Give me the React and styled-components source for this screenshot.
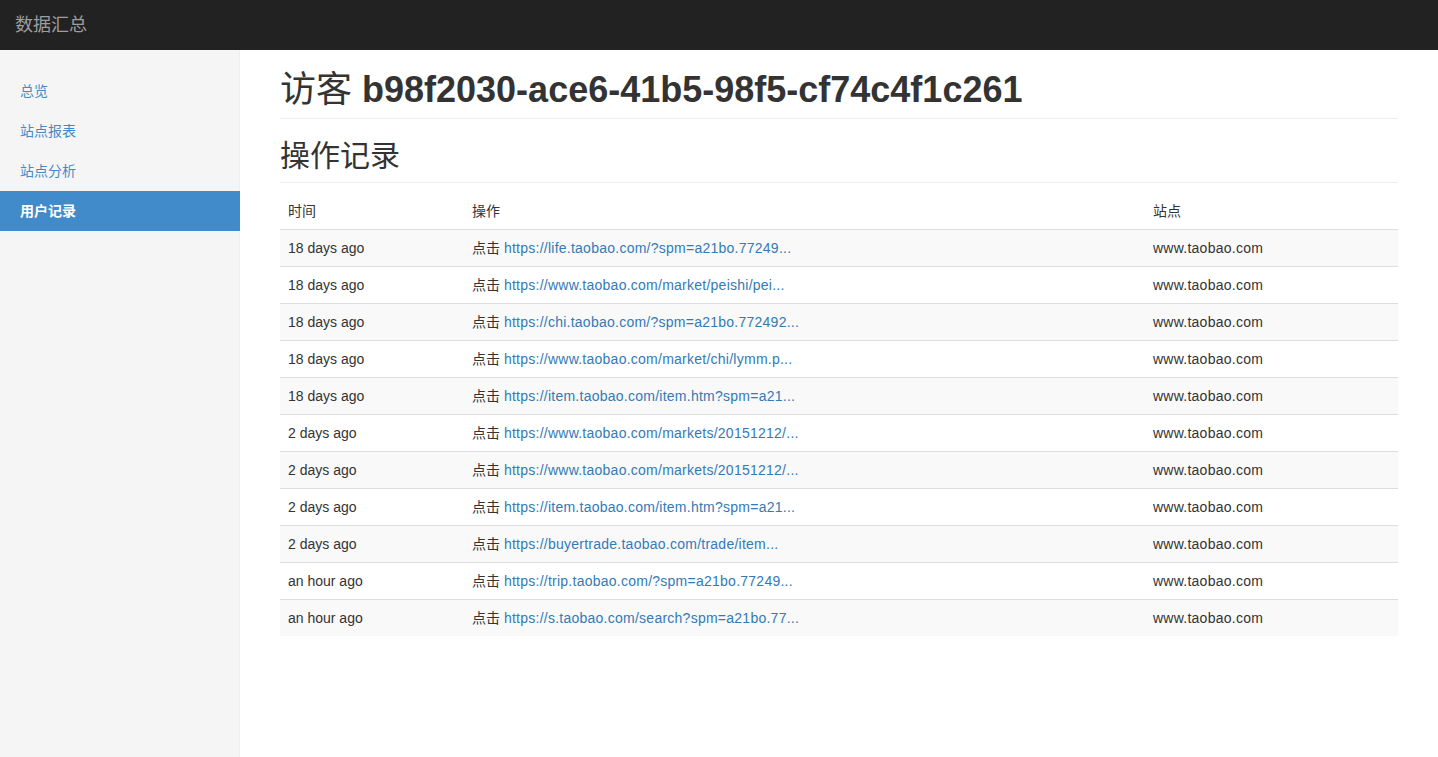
import React from "react";
import styled, { createGlobalStyle } from "styled-components";

const Global = createGlobalStyle`
  html, body { margin: 0; padding: 0; height: 100%; }
  body {
    font-family: "Liberation Sans", Arial, "Noto Sans CJK SC", sans-serif;
    font-size: 14px;
    line-height: 1.42857;
    color: #333;
    background: #fff;
  }
  * { box-sizing: border-box; }
`;

const Page = styled.div`
  display: flex;
  flex-direction: column;
  min-height: 757px;
`;

const Navbar = styled.header`
  height: 50px;
  background: #222;
  display: flex;
  align-items: center;
  padding: 0 15px;
  flex-shrink: 0;
`;

const Brand = styled.a`
  color: #9d9d9d;
  font-size: 18px;
  line-height: 20px;
  text-decoration: none;
`;

const Body = styled.div`
  display: flex;
  flex: 1;
`;

const Sidebar = styled.nav`
  width: 240px;
  flex-shrink: 0;
  background: #f5f5f5;
  border-right: 1px solid #eee;
  padding-top: 21px;
`;

const NavList = styled.ul`
  list-style: none;
  margin: 0;
  padding: 0;
`;

const NavItem = styled.li`
  a {
    display: block;
    padding: 10px 20px;
    line-height: 20px;
    font-size: 14px;
    text-decoration: none;
    color: ${(p) => (p.$active ? "#fff" : "#428bca")};
    background: ${(p) => (p.$active ? "#428bca" : "transparent")};
    font-weight: ${(p) => (p.$active ? "bold" : "normal")};
    margin-right: -1px;
  }
`;

const Main = styled.main`
  flex: 1;
  padding: 20px 40px 0 40px;
`;

const PageHeader = styled.h1`
  margin: 0 0 20px;
  padding-bottom: 8px;
  border-bottom: 1px solid #eee;
  font-size: 36px;
  line-height: 1.1;
  font-weight: normal;
  color: #333;
`;

const VisitorId = styled.span`
  font-weight: bold;
`;

const SubHeader = styled.h2`
  margin: 0 0 10px;
  padding-bottom: 10px;
  border-bottom: 1px solid #eee;
  font-size: 30px;
  line-height: 1.1;
  font-weight: normal;
  color: #333;
`;

const Table = styled.table`
  width: 100%;
  border-collapse: collapse;
  border-spacing: 0;
  font-size: 14px;
  margin-top: 10px;
`;

const Th = styled.th`
  text-align: left;
  font-weight: normal;
  padding: 8px;
  line-height: 20px;
  border-bottom: 1px solid #ddd;
  width: ${(p) => p.$w || "auto"};
`;

const Tr = styled.tr`
  background: ${(p) => (p.$odd ? "#f9f9f9" : "#fff")};
`;

const Td = styled.td`
  padding: 8px;
  line-height: 20px;
  border-top: 1px solid #ddd;
  vertical-align: top;
  white-space: nowrap;
  letter-spacing: ${(p) => (p.$wide ? "0.25px" : "normal")};
`;

const Link = styled.a`
  color: #337ab7;
  text-decoration: none;
  letter-spacing: 0.25px;
`;

const rows = [
  ["18 days ago", "https://life.taobao.com/?spm=a21bo.77249..."],
  ["18 days ago", "https://www.taobao.com/market/peishi/pei..."],
  ["18 days ago", "https://chi.taobao.com/?spm=a21bo.772492..."],
  ["18 days ago", "https://www.taobao.com/market/chi/lymm.p..."],
  ["18 days ago", "https://item.taobao.com/item.htm?spm=a21..."],
  ["2 days ago", "https://www.taobao.com/markets/20151212/..."],
  ["2 days ago", "https://www.taobao.com/markets/20151212/..."],
  ["2 days ago", "https://item.taobao.com/item.htm?spm=a21..."],
  ["2 days ago", "https://buyertrade.taobao.com/trade/item..."],
  ["an hour ago", "https://trip.taobao.com/?spm=a21bo.77249..."],
  ["an hour ago", "https://s.taobao.com/search?spm=a21bo.77..."],
];

const navItems = ["总览", "站点报表", "站点分析", "用户记录"];

export default function App() {
  return (
    <Page>
      <Global />
      <Navbar>
        <Brand href="#">数据汇总</Brand>
      </Navbar>
      <Body>
        <Sidebar>
          <NavList>
            {navItems.map((n, i) => (
              <NavItem key={n} $active={i === 3}>
                <a href="#">{n}</a>
              </NavItem>
            ))}
          </NavList>
        </Sidebar>
        <Main>
          <PageHeader>
            访客 <VisitorId>b98f2030-ace6-41b5-98f5-cf74c4f1c261</VisitorId>
          </PageHeader>
          <SubHeader>操作记录</SubHeader>
          <Table>
            <thead>
              <tr>
                <Th $w="184px">时间</Th>
                <Th $w="681px">操作</Th>
                <Th>站点</Th>
              </tr>
            </thead>
            <tbody>
              {rows.map((r, i) => (
                <Tr key={i} $odd={i % 2 === 0}>
                  <Td>{r[0]}</Td>
                  <Td>
                    点击 <Link href="#">{r[1]}</Link>
                  </Td>
                  <Td $wide>www.taobao.com</Td>
                </Tr>
              ))}
            </tbody>
          </Table>
        </Main>
      </Body>
    </Page>
  );
}
